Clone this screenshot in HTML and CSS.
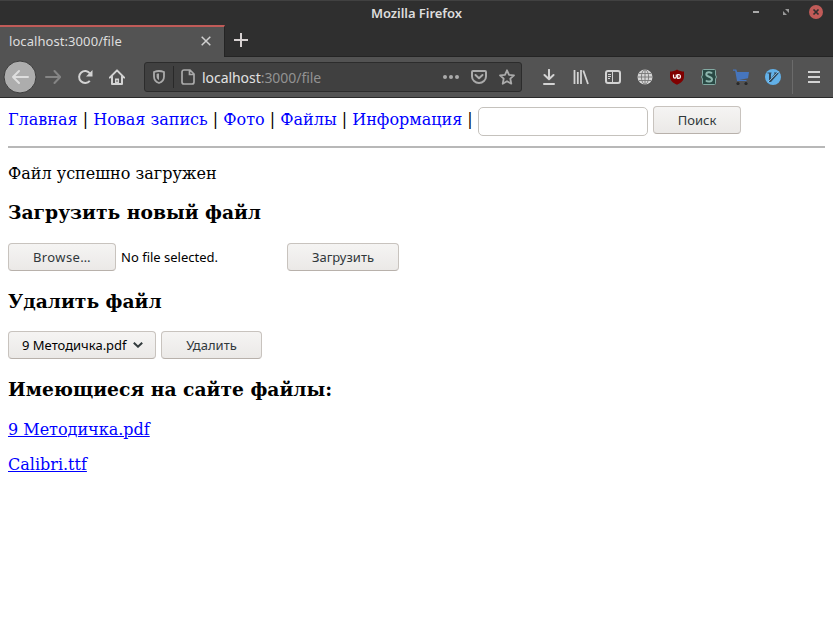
FILE: index.html
```html
<!DOCTYPE html>
<html lang="ru">
<head>
<meta charset="utf-8">
<title>Mozilla Firefox</title>
<link rel="stylesheet" href="styles.css">
</head>
<body>
<header class="titlebar">
  <span class="window-title">Mozilla Firefox</span>
  <svg class="window-controls" width="80" height="24" viewBox="0 0 80 24">
    <path d="M0 11h6" stroke="#aaa" stroke-width="2"/>
    <path d="M32 8h4v4zM30 10v4h4z" fill="#999"/>
    <circle cx="63" cy="11" r="7" fill="#c15b58"/>
    <path d="M60.500 8.500l5 5m0-5l-5 5" stroke="#2f2f2f" stroke-width="1.700"/>
  </svg>
</header>
<div class="tabs">
  <div class="tab">
    <span class="tab-label">localhost:3000/file</span>
    <svg width="10" height="10" viewBox="0 0 10 10"><path d="M.7.7l8.6 8.6m0-8.6L.7 9.3" stroke="#d0d0d0" stroke-width="1.5"/></svg>
  </div>
  <svg class="new-tab" width="14" height="14" viewBox="0 0 14 14"><path d="M7 0v14M0 7h14" stroke="#d8d2d2" stroke-width="2"/></svg>
</div>
<div class="toolbar">
  <div class="navigation">
    <svg width="34" height="34" viewBox="0 0 34 34"><circle cx="17" cy="17" r="16" fill="#adadad" stroke="#3c3c3c"/><path d="M25 17H10m6-6l-6 6 6 6" fill="none" stroke="#dedede" stroke-width="2" stroke-linecap="round" stroke-linejoin="round"/></svg>
    <svg width="16" height="16" viewBox="0 0 16 16"><path d="M1 8h14M9.500 2l5.700 6-5.700 6" fill="none" stroke="#858585" stroke-width="2" stroke-linecap="round" stroke-linejoin="round"/></svg>
    <svg width="16" height="16" viewBox="0 0 16 16"><path d="M12.800 11.800A6 6 0 1 1 13 4.500" fill="none" stroke="#d3d3d3" stroke-width="2"/><path d="M15.500 1v6.500H9z" fill="#d3d3d3"/></svg>
    <svg width="16" height="16" viewBox="0 0 16 16"><path d="M.8 8.600L8 1.400l7.200 7.200M3 7.500V15h10V7.500" fill="none" stroke="#d3d3d3" stroke-width="2" stroke-linecap="round" stroke-linejoin="round"/><path d="M6 15v-5.500h4V15" fill="#d3d3d3"/><path d="M8 11v2" stroke="#555"/></svg>
  </div>
  <div class="address">
    <svg width="12" height="14" viewBox="0 0 12 14"><path d="M6 1c2 0 3.500.4 5 1v4.500C11 10 8.500 12.200 6 13 3.500 12.200 1 10 1 6.500V2c1.500-.6 3-1 5-1z" fill="none" stroke="#aaa" stroke-width="1.800"/><path d="M6 3.600v6.600C4.300 9.200 3.600 8 3.600 6.300V4C4.500 3.700 5 3.600 6 3.600z" fill="#aaa"/></svg>
    <span class="divider"></span>
    <svg width="14" height="16" viewBox="0 0 14 16"><path d="M3 1h6l4 4v8a2 2 0 0 1-2 2H3a2 2 0 0 1-2-2V3a2 2 0 0 1 2-2zM8.500 1v4.500H13" fill="none" stroke="#aaa" stroke-width="1.700"/></svg>
    <span class="url"><span class="host">localhost</span>:3000/file</span>
    <div class="address-actions">
      <svg width="16" height="16" viewBox="0 0 16 16"><g fill="#aaa"><circle cx="2" cy="8" r="2"/><circle cx="8" cy="8" r="2"/><circle cx="14" cy="8" r="2"/></g></svg>
      <svg width="16" height="16" viewBox="0 0 16 16"><path d="M2 2h12a1 1 0 0 1 1 1v4.500a7 6.500 0 0 1-14 0V3a1 1 0 0 1 1-1zM4.500 6L8 9.300 11.500 6" fill="none" stroke="#aaa" stroke-width="2" stroke-linecap="round" stroke-linejoin="round"/></svg>
      <svg width="16" height="16" viewBox="0 0 16 16"><path d="M8 1.300l2 4.500 5 .5-3.700 3.400 1 5L8 12.200l-4.300 2.500 1-5L1 6.300l5-.5z" fill="none" stroke="#aaa" stroke-width="1.800" stroke-linejoin="round"/></svg>
    </div>
  </div>
  <div class="extensions">
    <svg width="16" height="16" viewBox="0 0 16 16"><path d="M8 .8v9.200M3.500 6L8 10.300 12.500 6M3 15h10" fill="none" stroke="#d3d3d3" stroke-width="2" stroke-linecap="round" stroke-linejoin="round"/></svg>
    <svg width="16" height="16" viewBox="0 0 16 16"><path d="M1.500 1v14M4.800 3v12M8 1v14M10.300 1.500L15 15" stroke="#d3d3d3" stroke-width="1.800"/></svg>
    <svg width="16" height="16" viewBox="0 0 16 16"><rect x="1" y="2" width="14" height="12" rx="2" fill="none" stroke="#d3d3d3" stroke-width="2"/><path d="M7.500 2v12M3 5.500h3M3 7.500h3M3 9.500h2" stroke="#d3d3d3" stroke-width="1"/></svg>
    <svg width="16" height="16" viewBox="0 0 16 16"><circle cx="8" cy="8" r="7.500" fill="#d6d6d6"/><g fill="none" stroke="#777" stroke-width=".9"><ellipse cx="8" cy="8" rx="3.600" ry="7.300"/><path d="M8 .5v15M.5 8h15M2 4.500h12M2 11.500h12"/></g></svg>
    <svg width="16" height="16" viewBox="0 0 16 16"><path d="M8 .5c2.200 1.500 4.500 2 7 2v5c0 4-3 6.500-7 8.200-4-1.700-7-4.200-7-8.200v-5c2.500 0 4.800-.5 7-2z" fill="#800000"/><path d="M4.500 5.500v2.200a1.200 1.200 0 0 0 2.800 0V5.500M8.700 5.500h.8a1.900 1.900 0 0 1 0 3.800h-.8z" fill="none" stroke="#fff" stroke-width="1.200"/></svg>
    <svg width="16" height="16" viewBox="0 0 16 16"><path d="M2.500.5h11a1 1 0 0 1 1 1V6l1 2-1 2v4.500a1 1 0 0 1-1 1h-11a1 1 0 0 1-1-1V10l-1-2 1-2V1.500a1 1 0 0 1 1-1z" fill="#294944" stroke="#83aaa3"/><path d="M11 4.500C10 3 5.500 2.600 5.300 5.300 5.100 8 11 7.500 11 10.300c0 3-4.700 2.800-6 1" fill="none" stroke="#8eb7af" stroke-width="2"/></svg>
    <svg width="16" height="16" viewBox="0 0 16 16"><path d="M0 .5h3.300l.9 2.500H16l-1 6.300-9 1.700h7.500v1H4L2.200 1.800H0z" fill="#4675bd"/><circle cx="5" cy="14.500" r="1.600" fill="#292929"/><circle cx="13" cy="14.500" r="1.600" fill="#292929"/></svg>
    <svg width="16" height="16" viewBox="0 0 16 16"><circle cx="8" cy="8" r="8" fill="#62b1e9"/><path d="M2.500 3.500h4v1H6v5l4-5H9v-1h4.500v1L6 13H4V4.500H2.500z" fill="#34495b"/><path d="M3 13L13.500 2.500" stroke="#a6dcff" stroke-width=".7"/></svg>
  </div>
  <span class="toolbar-separator"></span>
  <svg class="app-menu" width="12" height="12" viewBox="0 0 12 12"><path d="M0 1h12M0 6h12M0 11h12" stroke="#d3d3d3" stroke-width="2"/></svg>
</div>
<main class="page">
  <nav class="site-nav">
    <span class="links"><a href="#">Главная</a> | <a href="#">Новая запись</a> | <a href="#">Фото</a> | <a href="#">Файлы</a> | <a href="#">Информация</a> |</span>
    <input class="search" type="text">
    <button class="button search-button">Поиск</button>
  </nav>
  <hr class="rule">
  <p>Файл успешно загружен</p>
  <h3 class="upload-heading">Загрузить новый файл</h3>
  <div class="form-row">
    <button class="button browse">Browse…</button>
    <span class="file-status">No file selected.</span>
    <button class="button upload">Загрузить</button>
  </div>
  <h3>Удалить файл</h3>
  <div class="form-row">
    <button class="button select"><span>9 Методичка.pdf</span><svg width="10" height="6" viewBox="0 0 10 6"><path d="M.8.7L5 4.700 9.200.7" fill="none" stroke="#333b3d" stroke-width="2"/></svg></button>
    <button class="button delete">Удалить</button>
  </div>
  <h3 class="files-heading">Имеющиеся на сайте файлы:</h3>
  <p><a class="file-link" href="#">9 Методичка.pdf</a></p>
  <p><a class="file-link" href="#">Calibri.ttf</a></p>
</main>
</body>
</html>
```
FILE: styles.css
```css
* { box-sizing: border-box; }
body { margin: 0; height: 621px; overflow: hidden; background: #fff; color: #000; font: 16px/19px "DejaVu Serif", serif; }
svg { display: block; flex: none; }
.titlebar { display: grid; grid-template-columns: 1fr auto 1fr; height: 25px; background: #2f2f2f; border-top: 1px solid #414141; font-family: "Noto Sans", sans-serif; }
.window-title { grid-column: 2; color: #ddd; font-size: 13px; font-weight: 600; line-height: 25px; letter-spacing: -.05px; }
.window-controls { justify-self: end; }
.tabs { display: flex; height: 32px; background: #2f2f2f; border-bottom: 1px solid #242424; }
.tab { display: flex; align-items: center; justify-content: space-between; width: 225px; height: 32px; padding: 0 13px 0 9px; background: #535353; border-top: 2px solid #c15b58; border-right: 1px solid #242424; }
.tab svg { position: relative; top: -1px; }
.tab-label { color: #dedede; font: 13px/20px "Noto Sans", sans-serif; letter-spacing: .07px; margin-top: -2px; }
.new-tab { margin: 8px 0 0 9px; }
.toolbar { display: flex; align-items: center; height: 41px; padding: 0 13px 0 3px; background: #535353; border-bottom: 1px solid #292929; }
.navigation { display: flex; align-items: center; gap: 16px; width: 141px; }
.navigation svg:first-child { margin-right: -8px; }
.address { display: flex; align-items: center; width: 378px; height: 30px; padding: 0 6px 0 8px; background: #404040; border: 1px solid #2c2c2c; border-radius: 3px; }
.divider { width: 1px; height: 22px; margin: 0 7px 0 8px; background: #292929; }
.url { margin: 1px 0 0 7px; color: #929292; font: 14px/20px "Noto Sans", sans-serif; letter-spacing: -.05px; }
.host { color: #e2e2e2; }
.address-actions { display: flex; gap: 12px; margin-left: auto; }
.extensions { display: flex; gap: 16px; margin-left: 19px; }
.toolbar-separator { width: 1px; height: 34px; margin-left: 11px; background: #6b6b6b; }
.app-menu { margin-left: auto; }
.page { padding: 8px 8px 0; }
.page a { color: #00f; text-decoration: none; }
.page a.file-link { text-decoration: underline; }
.site-nav { display: flex; height: 30px; }
.links { width: 470px; padding-top: 4px; white-space: nowrap; }
.search { width: 170px; height: 29px; margin: 1px 5px 0 0; padding: 0 8px; border: 1px solid #c5c2bd; border-radius: 5px; background: #fff; }
.button { height: 28px; padding: 0; color: #30383b; background: linear-gradient(#f5f4f3, #ebe9e7); border: 1px solid #c8c3be; border-bottom-color: #b8b1ab; border-radius: 4px; font: 13px/20px "Noto Sans", sans-serif; white-space: nowrap; }
.search-button { width: 88px; }
.rule { height: 2px; margin: 10px 0 16px; border: 0; background: #b8b8b8; }
p { margin: 16px 0; }
h3 { margin: 19px 0; font-size: 18.72px; line-height: 22px; }
.upload-heading { margin: 18px 0 20px; }
.files-heading { margin-bottom: 20px; }
.form-row { display: flex; align-items: center; height: 28px; }
.browse { width: 108px; letter-spacing: .4px; }
.file-status { width: 171px; padding-left: 5px; font: 13px/20px "Noto Sans", sans-serif; }
.upload { width: 112px; }
.select { display: flex; align-items: center; justify-content: space-between; width: 148px; padding: 0 12px 0 13px; color: #000; }
.delete { width: 101px; margin-left: 5px; }
```
